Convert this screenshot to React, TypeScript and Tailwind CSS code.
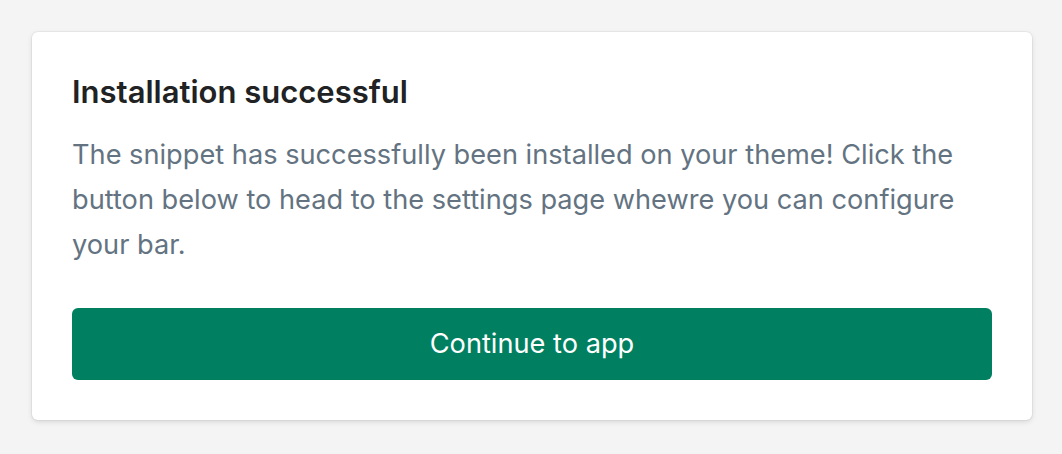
export default function App() {
  return (
    <div className="min-h-screen bg-[#f4f4f4] pl-8 pt-8 font-['Inter','Liberation_Sans',sans-serif]">
      <div className="w-[1000px] rounded-[6px] bg-white p-10 shadow-[0_0_0_1px_rgba(63,63,68,0.05),0_2px_5px_0_rgba(63,63,68,0.15)]">
        <h2 className="text-[31px] font-semibold leading-[40px] text-[#202223]">
          Installation successful
        </h2>
        <p className="mt-5 text-[27.2px] leading-[45px] text-[#637381]">
          The snippet has successfully been installed on your theme! Click the button below to
          head to the settings page whewre you can configure your bar.
        </p>
        <button
          type="button"
          className="mt-[41px] flex h-[72px] w-full items-center justify-center rounded-[6px] bg-[#008060] text-[27.2px] text-white"
        >
          Continue to app
        </button>
      </div>
    </div>
  );
}
